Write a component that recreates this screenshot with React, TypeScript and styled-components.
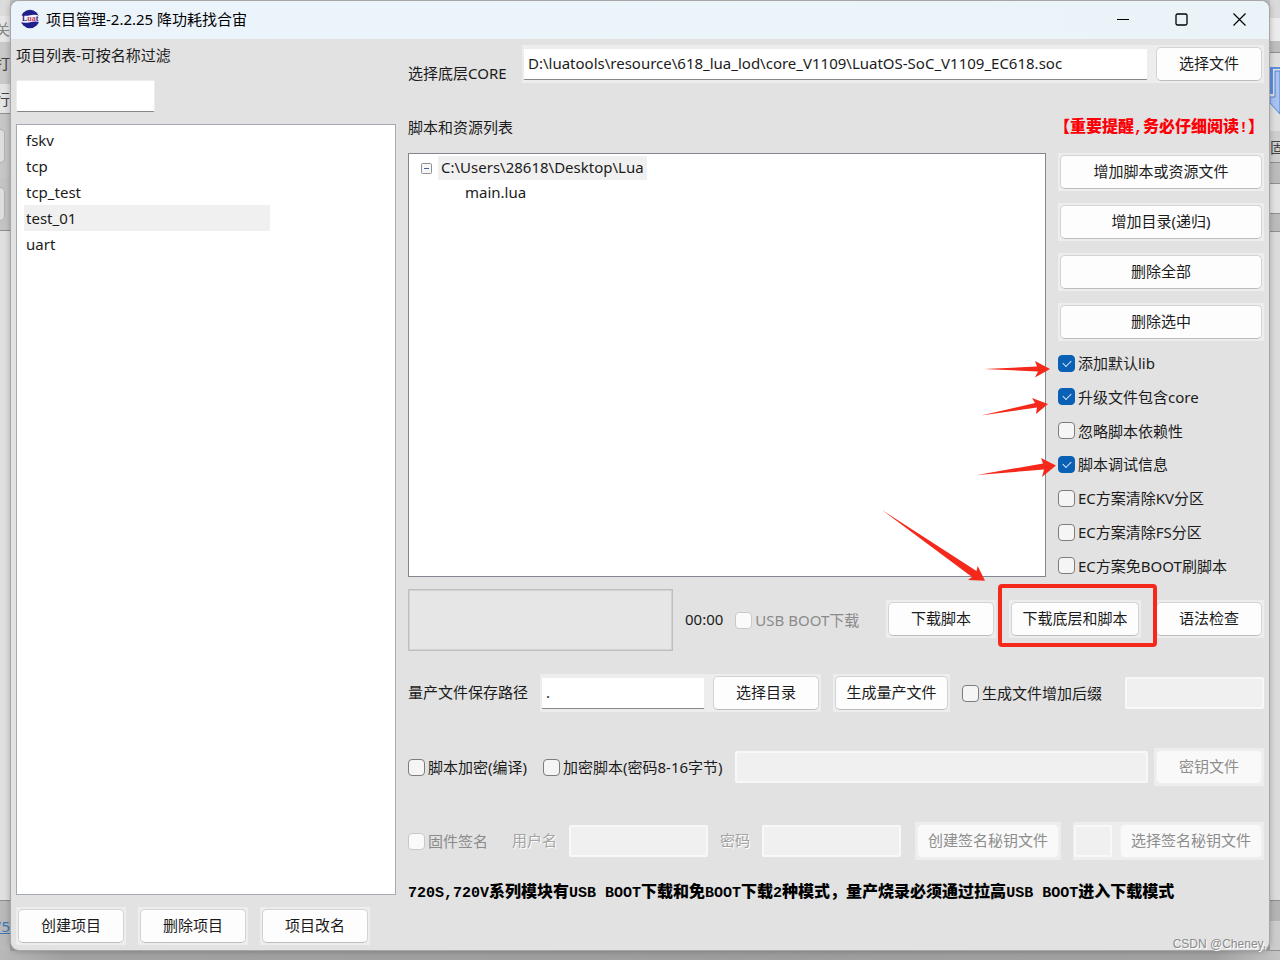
import React from 'react';
import styled, { createGlobalStyle, css } from 'styled-components';

const GlobalStyle = createGlobalStyle`
  *, *::before, *::after { box-sizing: border-box; }
  body {
    margin: 0;
    background: #a9a9a9;
    color: #1b1b1b;
    font-family: "Noto Sans", "Noto Sans CJK SC", sans-serif;
    font-size: 15px;
    line-height: 20px;
  }
  button, input { font: inherit; color: inherit; margin: 0; }
`;

const HALO = '#ededed';
const RED = '#f5291b';

const Desktop = styled.div`
  display: grid;
  grid-template-columns: 10px minmax(0, 1fr) 10px;
  grid-template-rows: 1fr 9px;
  min-height: 100vh;
  background: linear-gradient(#c4c4c4, #9f9f9f);
`;

const Strip = styled.div`
  display: flex;
  flex-direction: column;
  overflow: hidden;
`;

const Band = styled.div<{ $h?: number; $bg: string; $line?: boolean; $color?: string; $end?: boolean }>`
  display: flex;
  align-items: center;
  justify-content: ${(p) => (p.$end ? 'flex-end' : 'flex-start')};
  flex: ${(p) => (p.$h ? `0 0 ${p.$h}px` : '1 1 0')};
  background: ${(p) => p.$bg};
  border-bottom: ${(p) => (p.$line ? '1px solid #8f8f8f' : 'none')};
  color: ${(p) => p.$color ?? '#444'};
  overflow: hidden;
  white-space: nowrap;
`;

const Stub = styled.div`
  width: 5px;
  height: 34px;
  background: #dedede;
  border: 1px solid #b0b0b0;
  border-left: 0;
  border-radius: 0 5px 5px 0;
  margin-right: auto;
`;

const Floor = styled.div`
  grid-column: 1 / -1;
  background: linear-gradient(90deg, #b8b8b8, #a2a2a2 5%, #9d9d9d 60%, #a2a2a2 95%, #c4c4c4);
`;

const Window = styled.main`
  position: relative;
  display: flex;
  flex-direction: column;
  background: #e2e2e2;
  border: 1px solid #a6a6a6;
  border-radius: 9px;
  box-shadow: 0 0 6px rgba(0, 0, 0, 0.25);
`;

const TitleBar = styled.header`
  display: flex;
  align-items: center;
  height: 38px;
  padding: 0 1px 2px 9px;
  background: linear-gradient(90deg, #ecf4fb, #eaf4f8);
  border-radius: 8px 8px 0 0;
  color: #000;
`;

const Title = styled.h1`
  margin: 0 auto 0 6px;
  font-size: 15px;
  font-weight: 400;
`;

const CaptionButton = styled.button`
  display: grid;
  place-items: center;
  width: 58px;
  height: 36px;
  padding: 0;
  border: 0;
  background: none;
`;

const Body = styled.div`
  flex: 1;
  display: grid;
  grid-template-columns: 380px minmax(0, 1fr);
  gap: 12px;
  padding: 0 5px;
`;

const Sidebar = styled.section`
  display: flex;
  flex-direction: column;
  padding: 6px 0 5px;
`;

const Label = styled.label<{ $muted?: boolean }>`
  padding-bottom: 2px;
  white-space: nowrap;
  ${(p) => p.$muted && css`
    color: #a3a3a3;
    text-shadow: 1px 1px 0 #fff;
  `}
`;

const Field = styled.input<{ $w?: number }>`
  min-width: 0;
  padding: 0 4px 3px;
  border-radius: 2px;
  outline: none;
  width: ${(p) => (p.$w ? `${p.$w}px` : 'auto')};
  flex: ${(p) => (p.$w ? '0 0 auto' : '1 1 0')};
  height: 32px;
  background: #fff;
  border: 1px solid #ececec;
  border-bottom-color: #868686;
  &:disabled {
    background: #f0f0f0;
    border: 2px solid #f8f8f8;
  }
`;

const Filter = styled(Field)`
  flex: none;
  margin: 13px 0 12px;
`;

const ProjectList = styled.ul`
  flex: 1;
  margin: 0;
  padding: 2px 7px;
  list-style: none;
  background: #fff;
  border: 1px solid #a5a9b1;
`;

const Project = styled.li<{ $selected?: boolean }>`
  width: 246px;
  padding: 3px 2px;
  background: ${(p) => (p.$selected ? '#f0f0f0' : 'none')};
`;

const SidebarActions = styled.div`
  display: flex;
  gap: 12px;
  margin-top: 12px;
`;

const ButtonShell = styled.button<{ $w?: number }>`
  flex: none;
  display: flex;
  width: ${(p) => (p.$w ? `${p.$w}px` : 'auto')};
  height: 38px;
  padding: 2px;
  border: 0;
  background: ${HALO};
  &:disabled { color: #8d8d8d; }
`;

const Face = styled.span`
  flex: 1;
  display: flex;
  align-items: center;
  justify-content: center;
  padding-bottom: 2px;
  background: #fdfdfd;
  border: 1px solid #d3d3d3;
  border-bottom-color: #bdbdbd;
  border-radius: 5px;
  white-space: nowrap;
  button:disabled & {
    background: #f9f9f9;
    border-color: #f0f0f0;
  }
`;

const Button = ({ children, w, disabled }: { children: string; w?: number; disabled?: boolean }) => (
  <ButtonShell type="button" $w={w} disabled={disabled}>
    <Face>{children}</Face>
  </ButtonShell>
);

const Main = styled.section`
  display: flex;
  flex-direction: column;
  min-width: 0;
  padding: 6px 0 46px;
`;

const CoreRow = styled.div`
  display: flex;
  height: 40px;
  align-items: flex-start;
`;

const CoreLabel = styled(Label)`
  align-self: flex-end;
  width: 114px;
`;

const Halo = styled.div<{ $grow?: boolean }>`
  display: flex;
  align-items: center;
  flex: ${(p) => (p.$grow ? '1 1 0' : '0 0 auto')};
  gap: 6px;
  height: 38px;
  padding-left: 1px;
  background: ${HALO};
`;

const HeadingRow = styled.div`
  display: flex;
  align-items: center;
  justify-content: space-between;
  height: 38px;
  margin: 23px 0 7px;
`;

const Heading = styled.h2`
  margin: 0;
  font-size: 15px;
  font-weight: 400;
`;

const Notice = styled.strong<{ $red?: boolean }>`
  font-family: "Noto Sans CJK SC", sans-serif;
  font-size: 16px;
  line-height: 24px;
  font-weight: 900;
  white-space: nowrap;
  color: ${(p) => (p.$red ? '#fb0007' : '#000')};
`;

const Mono = styled.span`
  font-family: "Liberation Mono", monospace;
  font-size: 15px;
`;

const Middle = styled.div`
  flex: 1;
  display: grid;
  grid-template-columns: minmax(0, 1fr) 206px;
  gap: 12px;
`;

const Tree = styled.ul`
  margin: 0;
  padding: 2px 11px;
  list-style: none;
  background: #fff;
  border: 1px solid #82868f;
`;

const TreeRow = styled.div`
  display: flex;
  align-items: center;
  gap: 5px;
`;

const TreeText = styled.span<{ $selected?: boolean }>`
  display: inline-block;
  padding: 1px 3px 3px;
  background: ${(p) => (p.$selected ? '#f0f0f0' : 'none')};
`;

const SubTree = styled.ul`
  margin: 0;
  padding: 1px 0 0 42px;
  list-style: none;
`;

const Side = styled.div`
  display: flex;
  flex-direction: column;
  gap: 12px;
`;

const Checks = styled.div`
  flex: 1;
  display: flex;
  flex-direction: column;
  justify-content: space-between;
  padding-bottom: 1px;
`;

const CheckLabel = styled.label<{ $muted?: boolean }>`
  position: relative;
  display: flex;
  align-items: center;
  gap: 3px;
  white-space: nowrap;
  color: ${(p) => (p.$muted ? '#8b8b8b' : 'inherit')};
`;

const Box = styled.input`
  appearance: none;
  position: relative;
  flex: none;
  width: 17px;
  height: 17px;
  background: #f5f5f5;
  border: 1px solid #7d7d7d;
  border-radius: 4px;
  &:disabled { background: #fafafa; border-color: #c9c9c9; }
  &:checked { background: #0a60b5; border-color: #0a60b5; }
  &:checked::after {
    content: "";
    position: absolute;
    left: 4px;
    top: 4px;
    width: 8px;
    height: 5px;
    border-left: 1px solid #dbeaf8;
    border-bottom: 1px solid #dbeaf8;
    transform: rotate(-45deg);
  }
`;

const CheckArrow = styled.svg`
  position: absolute;
  left: -82px;
  top: 2px;
  overflow: visible;
  pointer-events: none;
`;

const Check = ({ children, checked, disabled, arrow }: {
  children: string; checked?: boolean; disabled?: boolean; arrow?: string;
}) => (
  <CheckLabel $muted={disabled}>
    <Box type="checkbox" defaultChecked={checked} disabled={disabled} />
    {children}
    {arrow && (
      <CheckArrow width="84" height="24" aria-hidden="true">
        <polygon points={arrow} fill={RED} />
      </CheckArrow>
    )}
  </CheckLabel>
);

const Row = styled.div<{ $top: number; $h?: number }>`
  display: flex;
  align-items: center;
  justify-content: space-between;
  height: ${(p) => p.$h ?? 38}px;
  margin-top: ${(p) => p.$top}px;
`;

const Group = styled.div<{ $gap?: number }>`
  display: flex;
  align-items: center;
  flex: none;
  gap: ${(p) => p.$gap ?? 12}px;
`;

const KeyGroup = styled.div`
  display: flex;
  align-items: center;
  flex: 1;
  gap: 6px;
  padding-left: 12px;
`;

const Progress = styled.div`
  width: 265px;
  height: 62px;
  background: #e6e6e6;
  border: 1px solid #bebebe;
  box-shadow: inset 0 0 0 1px #d2d2d2;
`;

const Elapsed = styled.span`
  padding-bottom: 2px;
`;

const Marked = styled.div`
  position: relative;
  z-index: 1;
  margin: 0 1px;
`;

const Frame = styled.div`
  position: absolute;
  inset: -16px -16px -9px -11px;
  border: 4px solid ${RED};
  border-radius: 4px;
  pointer-events: none;
`;

const BigArrow = styled.svg`
  position: absolute;
  left: -128px;
  top: -93px;
  pointer-events: none;
`;

const Launch = styled(Group)`
  padding-bottom: 2px;
`;

const Watermark = styled.span`
  position: absolute;
  right: 3px;
  bottom: -2px;
  font-family: "Liberation Sans", sans-serif;
  font-size: 12px;
  line-height: 16px;
  color: #8b8b8b;
  text-shadow: 1px 1px 0 #fff;
`;

const Logo = () => (
  <svg width="20" height="20" viewBox="0 0 20 20" aria-hidden="true">
    <circle cx="10" cy="10" r="9.300" fill="#20208c" />
    <path d="M0 6 Q5 7.500 10 6.200 T20 7 V13 Q15 12 10 13.200 T0 13 Z" fill="#f3f1fa" />
    <text x="2" y="12" fontFamily="Liberation Serif, serif" fontWeight="700" fontSize="8" fill="#20208c">
      L<tspan fill="#c43d60">ua</tspan>t
    </text>
  </svg>
);

const projects = ['fskv', 'tcp', 'tcp_test', 'test_01', 'uart'];

export default function App() {
  return (
    <>
      <GlobalStyle />
      <Desktop>
        <Strip aria-hidden="true">
          <Band $h={16} $bg="#dcdcdc" />
          <Band $h={26} $bg="#e6e6e6" $color="#888" $end>关</Band>
          <Band $h={42} $bg="#c9c9c9" $end>打</Band>
          <Band $h={30} $bg="#e4e4e4" $line $end>行</Band>
          <Band $h={64} $bg="#c6c6c6"><Stub /></Band>
          <Band $h={53} $bg="#c4c4c4" $line><Stub /></Band>
          <Band $bg="#e0e0e0" $line />
          <Band $h={50} $bg="#b9b9b9" $color="#3878b8" $end><u>75</u></Band>
        </Strip>
        <Window>
          <TitleBar>
            <Logo />
            <Title>项目管理-2.2.25 降功耗找合宙</Title>
            <CaptionButton type="button" aria-label="最小化">
              <svg width="13" height="13" stroke="#000" fill="none"><path d="M0 6.500H12" /></svg>
            </CaptionButton>
            <CaptionButton type="button" aria-label="最大化">
              <svg width="13" height="13" stroke="#000" fill="none"><rect x="1" y="1" width="11" height="11" rx="1.500" strokeWidth="1.300" /></svg>
            </CaptionButton>
            <CaptionButton type="button" aria-label="关闭">
              <svg width="13" height="13" stroke="#000" fill="none" strokeWidth="1.200"><path d="M.5 .5L12.500 12.500M12.500 .5L.5 12.500" /></svg>
            </CaptionButton>
          </TitleBar>
          <Body>
            <Sidebar>
              <Label htmlFor="filter">项目列表-可按名称过滤</Label>
              <Filter id="filter" type="text" $w={139} />
              <ProjectList>
                {projects.map((name) => (
                  <Project key={name} $selected={name === 'test_01'}>{name}</Project>
                ))}
              </ProjectList>
              <SidebarActions>
                <Button w={110}>创建项目</Button>
                <Button w={110}>删除项目</Button>
                <Button w={110}>项目改名</Button>
              </SidebarActions>
            </Sidebar>

            <Main>
              <CoreRow>
                <CoreLabel htmlFor="core">选择底层CORE</CoreLabel>
                <Halo $grow>
                  <Field id="core" type="text" defaultValue="D:\luatools\resource\618_lua_lod\core_V1109\LuatOS-SoC_V1109_EC618.soc" />
                  <Button w={110}>选择文件</Button>
                </Halo>
              </CoreRow>

              <HeadingRow>
                <Heading>脚本和资源列表</Heading>
                <Notice $red>【重要提醒<Mono>,</Mono>务必仔细阅读<Mono>!</Mono>】</Notice>
              </HeadingRow>

              <Middle>
                <Tree>
                  <li>
                    <TreeRow>
                      <svg width="13" height="13" fill="none" aria-hidden="true">
                        <rect x="1.500" y="1.500" width="10" height="10" rx="1" fill="#f6f6f6" stroke="#919191" />
                        <path d="M4 6.500H9" stroke="#4560a5" />
                      </svg>
                      <TreeText $selected>C:\Users\28618\Desktop\Lua</TreeText>
                    </TreeRow>
                    <SubTree>
                      <li><TreeText>main.lua</TreeText></li>
                    </SubTree>
                  </li>
                </Tree>
                <Side>
                  <Button>增加脚本或资源文件</Button>
                  <Button>增加目录(递归)</Button>
                  <Button>删除全部</Button>
                  <Button>删除选中</Button>
                  <Checks>
                    <Check checked arrow="8,14 61,11.500 59,6 74,14 59,22.500 62,16.500">添加默认lib</Check>
                    <Check checked arrow="5,26.500 59,14 56,9 72,15 60,25 61,18.500">升级文件包含core</Check>
                    <Check>忽略脚本依赖性</Check>
                    <Check checked arrow="1,19 67,7.500 65,2 80,9.500 66,21 68,13.500">脚本调试信息</Check>
                    <Check>EC方案清除KV分区</Check>
                    <Check>EC方案清除FS分区</Check>
                    <Check>EC方案免BOOT刷脚本</Check>
                  </Checks>
                </Side>
              </Middle>

              <Row $top={12} $h={62}>
                <Group>
                  <Progress />
                  <Elapsed>00:00</Elapsed>
                  <Check disabled>USB BOOT下载</Check>
                </Group>
                <Launch>
                  <Button w={110}>下载脚本</Button>
                  <Marked>
                    <Button w={132}>下载底层和脚本</Button>
                    <Frame />
                    <BigArrow width="110" height="76" aria-hidden="true">
                      <polygon points="1,3 95.500,64 96.700,59 104,73.700 87,73 91,70" fill={RED} />
                    </BigArrow>
                  </Marked>
                  <Button w={110}>语法检查</Button>
                </Launch>
              </Row>

              <Row $top={23}>
                <Group>
                  <Label htmlFor="output">量产文件保存路径</Label>
                  <Halo>
                    <Field id="output" type="text" defaultValue="." $w={164} />
                    <Button w={110}>选择目录</Button>
                  </Halo>
                  <Button w={117}>生成量产文件</Button>
                  <Check>生成文件增加后缀</Check>
                </Group>
                <Field disabled type="text" aria-label="后缀" $w={139} />
              </Row>

              <Row $top={36}>
                <Group $gap={16}>
                  <Check>脚本加密(编译)</Check>
                  <Check>加密脚本(密码8-16字节)</Check>
                </Group>
                <KeyGroup>
                  <Field disabled type="text" aria-label="加密密码" />
                  <Button w={110} disabled>密钥文件</Button>
                </KeyGroup>
              </Row>

              <Row $top={36}>
                <Group $gap={24}>
                  <Check disabled>固件签名</Check>
                  <Group>
                    <Label $muted htmlFor="user">用户名</Label>
                    <Field disabled id="user" type="text" $w={139} />
                    <Label $muted htmlFor="password">密码</Label>
                    <Field disabled id="password" type="text" $w={139} />
                  </Group>
                </Group>
                <Group>
                  <Button w={146} disabled>创建签名秘钥文件</Button>
                  <Halo>
                    <Field disabled type="text" aria-label="签名秘钥" $w={38} />
                    <Button w={146} disabled>选择签名秘钥文件</Button>
                  </Halo>
                </Group>
              </Row>

              <Row $top={20} $h={24}>
                <Notice>
                  <Mono>720S,720V</Mono>系列模块有<Mono>USB BOOT</Mono>下载和免<Mono>BOOT</Mono>下载<Mono>2</Mono>种模式，量产烧录必须通过拉高<Mono>USB BOOT</Mono>进入下载模式
                </Notice>
              </Row>
            </Main>
          </Body>
          <Watermark>CSDN @Cheney,</Watermark>
        </Window>
        <Strip aria-hidden="true">
          <Band $h={18} $bg="#dadada" />
          <Band $h={23} $bg="#ececec" />
          <Band $h={12} $bg="#bebebe" $line />
          <Band $h={78} $bg="#dfdfdf">
            <svg width="10" height="52" fill="none">
              <path d="M0 1H10V3H3V28H0Z" fill="#5e8fe2" />
              <path d="M5 5H10V48L0 37V31H5Z" fill="#a9c2f0" stroke="#4f82dc" />
            </svg>
          </Band>
          <Band $h={32} $bg="#cfcfcf" $line>固</Band>
          <Band $h={21} $bg="#bcbcbc" $line />
          <Band $h={30} $bg="#e3e3e3" $line />
          <Band $h={18} $bg="#bcbcbc" $line />
          <Band $bg="#dcdcdc" $line />
          <Band $h={20} $bg="#b4b4b4" />
          <Band $h={30} $bg="#cccccc" $line />
        </Strip>
        <Floor />
      </Desktop>
    </>
  );
}
